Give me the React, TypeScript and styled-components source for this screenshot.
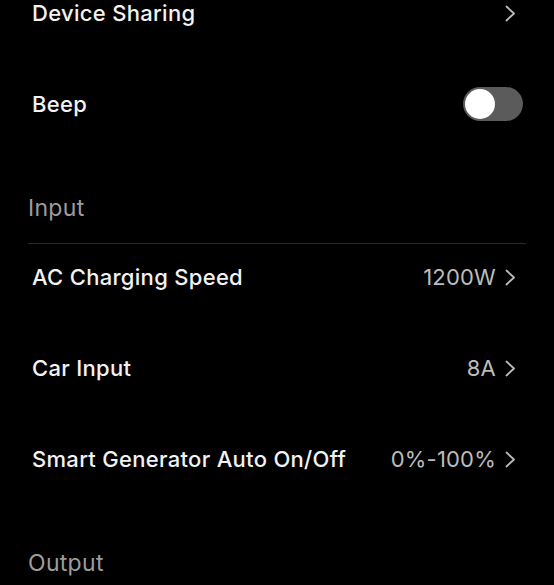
import React from "react";
import styled, { createGlobalStyle } from "styled-components";

const GlobalStyle = createGlobalStyle`
  html, body {
    margin: 0;
    padding: 0;
    background: #000;
  }
  body {
    font-family: Inter, "Noto Sans", "Liberation Sans", sans-serif;
    -webkit-font-smoothing: antialiased;
    overflow: hidden;
  }
`;

const Page = styled.div`
  width: 554px;
  height: 585px;
  background: #000;
  overflow: hidden;
`;

const List = styled.div`
  margin-top: -20px;
  padding: 0 28px;
  display: flex;
  flex-direction: column;
`;

const Row = styled.div`
  height: 91px;
  box-sizing: border-box;
  padding: 16px 0 41px 4px;
  display: flex;
  align-items: flex-start;
`;

const Line = styled.div`
  flex: 1;
  height: 34px;
  display: flex;
  align-items: center;
  justify-content: space-between;
`;

const Title = styled.span`
  color: #f2f2f2;
  font-size: 22px;
  font-weight: 500;
  letter-spacing: 0.3px;
`;

const Trail = styled.span`
  display: flex;
  align-items: center;
  gap: 9px;
  margin-right: ${(p: { $edge: number }) => p.$edge}px;
`;

const Value = styled.span`
  color: #bcbcbc;
  font-size: 22px;
  font-weight: 400;
  letter-spacing: 0.2px;
`;

const Header = styled.div`
  padding-top: 35px;
  display: flex;
  flex-direction: column;
`;

const Label = styled.span`
  color: #9c9c9c;
  font-size: 23px;
  font-weight: 400;
  line-height: 22px;
  letter-spacing: 0.3px;
`;

const Divider = styled.div`
  height: 1px;
  background: #2a2a2a;
  margin-top: 24px;
`;

const Track = styled.div`
  width: 60px;
  height: 34px;
  border-radius: 17px;
  background: #5b5b5b;
  box-sizing: border-box;
  padding: 2px;
  display: flex;
  justify-content: ${(p: { $on: boolean }) => (p.$on ? "flex-end" : "flex-start")};
`;

const Knob = styled.div`
  width: 30px;
  height: 30px;
  border-radius: 50%;
  background: #fff;
`;

const Chevron = () => (
  <svg width="11" height="17" viewBox="0 0 11 17" fill="none">
    <polyline
      points="1.5,1.5 9,8.5 1.5,15.5"
      stroke="#bbbbbb"
      strokeWidth="1.8"
      strokeLinecap="round"
      strokeLinejoin="round"
    />
  </svg>
);

type Item = { title: string; value?: string };

const NavRow = ({ title, value }: Item) => (
  <Row>
    <Line>
      <Title>{title}</Title>
      <Trail $edge={10}>
        {value && <Value>{value}</Value>}
        <Chevron />
      </Trail>
    </Line>
  </Row>
);

const inputItems: Item[] = [
  { title: "AC Charging Speed", value: "1200W" },
  { title: "Car Input", value: "8A" },
  { title: "Smart Generator Auto On/Off", value: "0%-100%" },
];

export default function App() {
  return (
    <Page>
      <GlobalStyle />
      <List>
        <NavRow title="Device Sharing" />
        <Row>
          <Line>
            <Title>Beep</Title>
            <Trail $edge={3}>
              <Track $on={false}>
                <Knob />
              </Track>
            </Trail>
          </Line>
        </Row>
        <Header>
          <Label>Input</Label>
          <Divider />
        </Header>
        {inputItems.map((it) => (
          <NavRow key={it.title} {...it} />
        ))}
        <Header>
          <Label>Output</Label>
        </Header>
      </List>
    </Page>
  );
}
